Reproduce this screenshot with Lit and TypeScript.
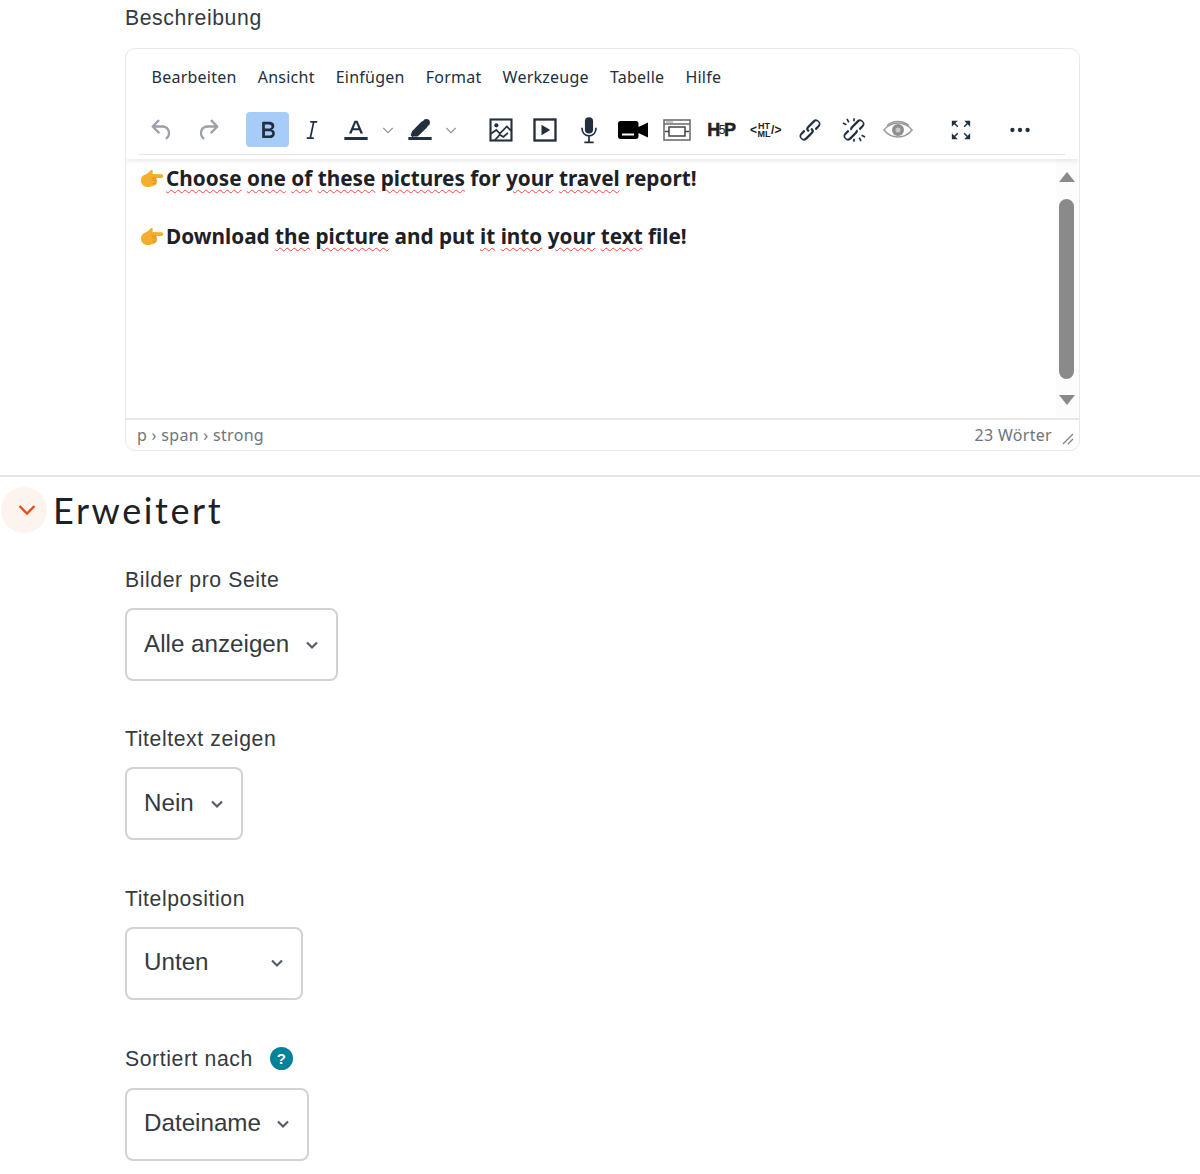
import { LitElement, html, css, svg } from "lit";
import { customElement } from "lit/decorators.js";

const hand = html`<svg class="hand" viewBox="0 0 24 24" width="24" height="24"><path fill="#f4ad2f" d="M1 13.500C1 10 3 8.500 5.500 7.500 7.500 6.700 9 5 10.500 3.500c1-1 2.800-.2 2.300 1.300L12.300 7 21.500 7.200c2.400.1 2.400 3.600 0 3.700l-5.300.2c.4.600.5 1.300.4 1.900.6.400.8 1.200.6 1.900-.1.500-.5 1-.9 1.200.2.900-.3 1.800-1.100 2.200L9.500 20c-4 .6-8.500-1.300-8.500-6.500z"/><path fill="none" stroke="#d68a12" stroke-width=".9" d="M11.500 11h4.700M16.600 13l-4.300.2M16.300 16.200l-3.500.2"/></svg>`;

const LINK = "M6.200 12.300a1 1 0 0 1 1.400 1.400l-2 2a2 2 0 1 0 2.600 2.800l4.800-4.800a1 1 0 0 0 0-1.400 1 1 0 1 1 1.400-1.300 2.900 2.900 0 0 1 0 4L9.600 20a3.900 3.900 0 0 1-5.500-5.500l2-2zm11.600-.6a1 1 0 0 1-1.400-1.400l2-2a2 2 0 1 0-2.600-2.800L11 10.300a1 1 0 0 0 0 1.400A1 1 0 1 1 9.600 13a2.900 2.900 0 0 1 0-4L14.400 4a3.900 3.900 0 0 1 5.500 5.500l-2 2z";
const UNDO = "M6.400 8H12c3.700 0 6.200 2 6.800 5.100.6 2.700-.4 5.600-2.300 6.800a1 1 0 0 1-1-1.800c1.100-.6 1.800-2.700 1.400-4.600-.5-2.100-2.100-3.500-4.900-3.500H6.400l3.300 3.300a1 1 0 1 1-1.400 1.400l-5-5a1 1 0 0 1 0-1.400l5-5a1 1 0 0 1 1.400 1.400L6.400 8z";

const I = {
  undo: svg`<path fill="currentColor" d=${UNDO}/>`,
  redo: svg`<path fill="currentColor" transform="matrix(-1 0 0 1 24 0)" d=${UNDO}/>`,
  bold: svg`<path fill="currentColor" d="M7.800 19c-.3 0-.5 0-.6-.2l-.2-.5V5.700c0-.2 0-.4.2-.5l.6-.2h5c1.500 0 2.700.3 3.500 1 .7.6 1.100 1.400 1.100 2.500a3 3 0 0 1-.6 1.900c-.4.6-1 1-1.600 1.200.4.100.9.300 1.300.6s.8.700 1 1.100c.2.500.3 1 .3 1.600 0 1.300-.4 2.300-1.300 3-.8.7-2.100 1-3.800 1H7.800zm5-8.300c.6 0 1.200-.1 1.600-.5.4-.3.600-.7.600-1.300 0-1.100-.8-1.700-2.300-1.700H9.300v3.500h3.400zm.5 6c.7 0 1.300-.1 1.700-.4.4-.4.600-.9.600-1.500s-.2-1-.7-1.400c-.4-.3-1-.4-2-.4H9.400v3.800h4z"/>`,
  italic: svg`<path fill="none" stroke="currentColor" stroke-width="1.500" d="M10.500 5h6M7.500 19h6M13.500 5l-3 14"/>`,
  textColor: svg`<path fill="currentColor" d="M10.700 4h2.600L18 15h-2.200l-1.100-2.800H9.300L8.200 15H6zm-.7 6.500h4L12 5.600zM2 18h20v2.500H2z"/>`,
  highlight: svg`<path fill="currentColor" d="M2 18h20v2.500H2zM4 16.500l1.200-3.500 8-8c1-1 2.300-1 3.300 0l1.500 1.500c1 1 1 2.300 0 3.300l-8 7.700H6.500l-.8.800z"/><circle cx="17.500" cy="5.500" r="3" fill="currentColor"/>`,
  chevron: svg`<path fill="none" stroke="currentColor" stroke-width="1.600" d="m5 9 7 7 7-7"/>`,
  image: svg`<rect x="3" y="3" width="18" height="18" fill="none" stroke="currentColor" stroke-width="1.800"/><circle cx="8" cy="8" r="1.800" fill="currentColor"/><path fill="none" stroke="currentColor" stroke-width="1.500" d="M3 15.500 8 12l3 3 6-6 4 4M6.500 21l4.500-5 3 2 4-3.500"/>`,
  media: svg`<rect x="3" y="3" width="18" height="18" fill="none" stroke="currentColor" stroke-width="2"/><path fill="currentColor" d="M9 7.500v9l7.500-4.500z"/>`,
  mic: svg`<rect x="8.500" y="1" width="7" height="14" rx="3.500" fill="currentColor"/><path fill="none" stroke="currentColor" stroke-width="1.500" d="M6 10c0 4 2.200 7 6 7s6-3 6-7M12 17v5M8 22.500h8"/>`,
  video: svg`<path fill="#000" d="M1 5.500C1 4 2 3 3.500 3H19c1.500 0 2.500 1 2.500 2.500V9L31 4.500v15L21.500 15v3.500c0 1.500-1 2.500-2.500 2.500H3.500C2 21 1 20 1 18.500z"/><path stroke="#fff" stroke-width="1.800" d="M5 16.500h12"/>`,
  embed: svg`<rect x="1" y="2" width="26" height="20" fill="#fff" stroke="#666" stroke-width="1.500"/><path stroke="#666" stroke-width="1.500" d="M1 6h26"/><path stroke="#888" d="M3 4h7"/><rect x="6" y="9" width="16" height="9" fill="none" stroke="#444" stroke-width="1.500"/><path stroke="#444" stroke-width="1.500" d="M2 13.500h4M22 13.500h4"/>`,
  link: svg`<path fill="currentColor" d=${LINK}/>`,
  unlink: svg`<path fill="currentColor" d=${LINK}/><path fill="none" stroke="#fff" stroke-width="3" d="m9 15 6-6"/><path fill="none" stroke="currentColor" stroke-width="1.400" d="M6 2.500 7.500 5.500M2.500 6 5.500 7.500M18 21.500l-1.500-3M21.500 18l-3-1.500M12 2v2.500M12 19.500V22"/>`,
  eye: svg`<path fill="#fff" stroke="#9a9a9a" stroke-width="1.500" d="M1 12c4-5 8.500-7 14-7s10 2 14 7c-4 5-8.500 7-14 7S5 17 1 12z"/><path fill="none" stroke="#9a9a9a" stroke-width="1.300" d="M4 7.500C7 5 10.500 3.500 15 3.500S23 5 26 7.500"/><circle cx="15" cy="12" r="6" fill="#8f8f8f"/><circle cx="15" cy="12" r="2.500" fill="#c8c8c8"/>`,
  fullscreen: svg`<path fill="none" stroke="currentColor" stroke-width="1.600" d="M3 3l5.500 5.500M21 3l-5.500 5.500M3 21l5.500-5.500M21 21l-5.500-5.500"/><path fill="currentColor" d="M2 2h6.500L2 8.500zM22 2h-6.500L22 8.500zM2 22h6.500L2 15.500zM22 22h-6.500l6.500-6.500z"/>`,
  more: svg`<circle cx="5" cy="12" r="2" fill="currentColor"/><circle cx="12" cy="12" r="2" fill="currentColor"/><circle cx="19" cy="12" r="2" fill="currentColor"/>`,
};

@customElement("app-root")
export class AppRoot extends LitElement {
  static styles = css`
    :host { display: block; width: 1200px; height: 1174px; overflow: hidden; background: #fff; font-family: "Liberation Sans", Arial, sans-serif; color: #1d2125; }
    .desc { padding: 6px 120px 0 125px; }
    .label { font-size: 21.200px; letter-spacing: .6px; line-height: 24px; color: #343a40; }
    .desc .label { height: 42px; }
    .editor { height: 403px; box-sizing: border-box; border: 1px solid #e6e8ea; border-radius: 10px; display: flex; flex-direction: column; overflow: hidden; background: #fff; }
    .header { height: 110px; box-sizing: border-box; flex: none; padding: 16px 14px 0 13px; box-shadow: 0 2px 5px rgba(34,47,62,.1); position: relative; }
    .menu { display: flex; height: 24px; padding-left: 12.500px; gap: 21px; font: 16px/24px "Noto Sans", "Open Sans", sans-serif; letter-spacing: .25px; color: #222f3e; }
    .toolbar { display: flex; align-items: center; height: 35px; margin-top: 23px; color: #222f3e; }
    .group { display: flex; align-items: center; }
    .g2 { margin-left: 15px; }
    .g3 { margin-left: 20px; }
    .g4 { margin-left: 18px; }
    .g5 { margin-left: 15px; }
    .btn { width: 44.200px; height: 35px; display: flex; align-items: center; justify-content: center; border-radius: 4px; flex: none; }
    .btn.undo { width: 46px; color: #9aa1a9; }
    .btn.on { background: #a6ccf7; width: 43px; margin-right: 1px; }
    .btn.narrow { width: 20px; color: #8b949e; }
    .btn.narrow2 { width: 16px; color: #8b949e; }
    .rule { height: 1px; background: #e3e5e8; margin-top: 7px; }
    .h5p { display: flex; align-items: center; font: 700 18px/1 "Liberation Sans", sans-serif; -webkit-text-stroke: .5px #222; color: #222; }
    .h5p i { font: 400 12px/1 "Liberation Sans", sans-serif; -webkit-text-stroke: 0; margin: 0 -1.500px; }
    .htmlbtn { font: 700 9px/8px "Liberation Sans", sans-serif; color: #222; text-align: center; display: flex; align-items: center; }
    .htmlbtn span { display: inline-block; width: 14px; white-space: normal; }
    .htmlbtn b { font-size: 12px; font-weight: 700; }
    .body { flex: 1; display: flex; min-height: 0; }
    .content { flex: 1; padding: 5px 14px; font: 700 20.750px/29px "Noto Sans", "Open Sans", sans-serif; color: #1d2125; }
    .content p { margin: 0 0 29px; display: flex; align-items: center; height: 29px; }
    .line { white-space: pre; }
    .hand { margin-right: 2px; flex: none; }
    .sp { text-decoration: underline wavy #f44; text-decoration-thickness: 1.200px; text-underline-offset: 3px; }
    .scroll { width: 21px; flex: none; display: flex; flex-direction: column; align-items: center; box-sizing: border-box; padding: 13px 0 13px; margin-right: 2px; justify-content: space-between; background: #fcfcfc; }
    .thumb { width: 15px; height: 180px; border-radius: 8px; background: #8a8a8a; }
    .up { width: 0; border: 8px solid transparent; border-top: 0; border-bottom: 10px solid #8a8a8a; }
    .down { width: 0; border: 8px solid transparent; border-bottom: 0; border-top: 10px solid #8a8a8a; }
    .status { flex: none; height: 32px; border-top: 2px solid #e6e8ea; box-sizing: border-box; display: flex; align-items: center; justify-content: space-between; padding: 0 5px 0 11px; font: 16px/24px "Noto Sans", "Open Sans", sans-serif; letter-spacing: .3px; color: #6c757d; }
    .status .right { display: flex; align-items: center; gap: 10px; }
    .status svg { margin-top: 8px; }
    hr { margin: 24px 0 0; border: 0; border-top: 2px solid #e3e6ea; }
    .section { display: flex; align-items: center; height: 46px; margin-top: 10px; }
    .toggle { width: 46px; height: 46px; margin-left: 1px; border-radius: 50%; background: #fdf4f0; display: flex; align-items: center; justify-content: center; flex: none; padding-left: 6px; box-sizing: border-box; }
    h2 { margin: 0 0 0 6px; font: 400 36px/46px "Lato", "Inter", sans-serif; color: #1d2125; letter-spacing: 2.600px; }
    .fields { padding: 0 0 0 125px; margin-top: 35px; display: flex; flex-direction: column; gap: 46.300px; }
    .field { display: flex; flex-direction: column; align-items: flex-start; gap: 16px; }
    .labelrow { display: flex; align-items: center; gap: 17px; height: 26px; }
    .select { height: 73px; box-sizing: border-box; border: 2px solid #d0d2d4; border-radius: 8px; display: flex; align-items: center; justify-content: space-between; padding: 0 17px 2px 17px; font-size: 24.200px; color: #343a40; background: #fff; }
    .select svg { color: #555e68; margin-top: 2px; }
    .help { width: 23px; height: 23px; border-radius: 50%; background: #00829b; color: #fff; display: flex; align-items: center; justify-content: center; font: 700 15px/1 "Liberation Sans", sans-serif; }
  `;

  private icon(p: unknown, w = 28, h = 28, vw = 24, vh = 24) {
    return html`<svg width=${w} height=${h} viewBox="0 0 ${vw} ${vh}">${p}</svg>`;
  }

  private select(text: string, width: number) {
    return html`<div class="select" style="width:${width}px"><span>${text}</span>
      <svg width="14" height="14" viewBox="0 0 14 14"><path fill="none" stroke="currentColor" stroke-width="2.200" d="m2 4.500 5 5 5-5"/></svg></div>`;
  }

  /* Spell-checker squiggle runs word by word and leaves the spaces clean. */
  private misspelt(text: string) {
    return text.split(" ").map((w, i) => html`${i ? " " : ""}<span class="sp">${w}</span>`);
  }

  render() {
    return html`
      <div class="desc">
        <div class="label">Beschreibung</div>
        <div class="editor">
          <div class="header">
            <div class="menu">
              <span>Bearbeiten</span><span>Ansicht</span><span>Einfügen</span><span>Format</span><span>Werkzeuge</span><span>Tabelle</span><span>Hilfe</span>
            </div>
            <div class="toolbar">
              <div class="group">
                <div class="btn undo">${this.icon(I.undo)}</div>
                <div class="btn undo">${this.icon(I.redo)}</div>
              </div>
              <div class="group g2">
                <div class="btn on">${this.icon(I.bold)}</div>
                <div class="btn">${this.icon(I.italic)}</div>
                <div class="btn">${this.icon(I.textColor)}</div>
                <div class="btn narrow">${this.icon(I.chevron, 16, 16)}</div>
                <div class="btn">${this.icon(I.highlight)}</div>
                <div class="btn narrow2">${this.icon(I.chevron, 16, 16)}</div>
              </div>
              <div class="group g3">
                <div class="btn">${this.icon(I.image)}</div>
                <div class="btn">${this.icon(I.media)}</div>
                <div class="btn">${this.icon(I.mic)}</div>
                <div class="btn">${this.icon(I.video, 32, 24, 32, 24)}</div>
                <div class="btn">${this.icon(I.embed, 28, 24, 28, 24)}</div>
                <div class="btn"><span class="h5p">H<i>5</i>P</span></div>
                <div class="btn"><span class="htmlbtn"><b>&lt;</b><span>HT ML</span><b>/&gt;</b></span></div>
                <div class="btn">${this.icon(I.link)}</div>
                <div class="btn">${this.icon(I.unlink)}</div>
                <div class="btn">${this.icon(I.eye, 32, 24, 30, 24)}</div>
              </div>
              <div class="group g4"><div class="btn">${this.icon(I.fullscreen, 22, 22)}</div></div>
              <div class="group g5"><div class="btn">${this.icon(I.more, 26, 26)}</div></div>
            </div>
            <div class="rule"></div>
          </div>
          <div class="body">
            <div class="content">
              <p>${hand}<span class="line">${this.misspelt("Choose one of these pictures")} for ${this.misspelt("your travel")} report!</span></p>
              <p>${hand}<span class="line">Download ${this.misspelt("the picture")} and put ${this.misspelt("it into your text")} file!</span></p>
            </div>
            <div class="scroll"><div class="up"></div><div class="thumb"></div><div class="down"></div></div>
          </div>
          <div class="status">
            <span>p › span › strong</span>
            <div class="right"><span>23 Wörter</span>
              <svg width="12" height="12" viewBox="0 0 12 12"><path fill="none" stroke="#7a838c" stroke-width="1.300" d="M11 1 1 11M11 6l-5 5"/></svg>
            </div>
          </div>
        </div>
      </div>
      <hr />
      <div class="section">
        <div class="toggle"><svg width="24" height="24" viewBox="0 0 24 24"><path fill="none" stroke="#e8501b" stroke-width="2.400" d="m4.500 8 7.500 7.500L19.500 8"/></svg></div>
        <h2>Erweitert</h2>
      </div>
      <div class="fields">
        <div class="field"><div class="label">Bilder pro Seite</div>${this.select("Alle anzeigen", 213)}</div>
        <div class="field"><div class="label">Titeltext zeigen</div>${this.select("Nein", 118)}</div>
        <div class="field"><div class="label">Titelposition</div>${this.select("Unten", 178)}</div>
        <div class="field"><div class="labelrow"><div class="label">Sortiert nach</div><div class="help">?</div></div>${this.select("Dateiname", 184)}</div>
      </div>
    `;
  }
}
